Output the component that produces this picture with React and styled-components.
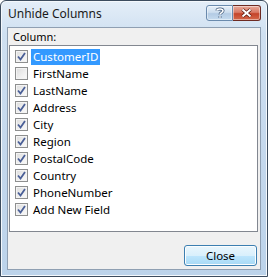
import React from 'react';
import styled, { createGlobalStyle } from 'styled-components';

const GlobalStyle = createGlobalStyle`
  html, body { margin: 0; padding: 0; background: #ffffff; }
  body { font-family: "Noto Sans", "DejaVu Sans", sans-serif; }
`;

const Window = styled.div`
  box-sizing: border-box;
  width: 268px;
  height: 277px;
  display: flex;
  flex-direction: column;
  border: 1px solid #3c4c5e;
  border-radius: 6px 6px 0 0;
  background: linear-gradient(180deg, #e4eef8 0%, #cfe0f1 12%, #c3d7ec 60%, #bcd3ea 100%);
  box-shadow: inset 0 0 0 1px #f4f8fc;
  overflow: hidden;
`;

const TitleBar = styled.div`
  height: 26px;
  display: flex;
  align-items: flex-start;
  justify-content: space-between;
  padding: 0 6px 0 7px;
`;

const Title = styled.div`
  font-size: 12px;
  color: #1a1a1a;
  margin-top: 4px;
`;

const Caption = styled.div`
  display: flex;
  margin-top: 4px;
`;

const CapButton = styled.div`
  box-sizing: border-box;
  width: ${(p) => (p.$close ? '28px' : '27px')};
  height: 16px;
  border: 1px solid ${(p) => (p.$close ? '#6d2a22' : '#6a8aad')};
  border-left-width: ${(p) => (p.$close ? '0' : '1px')};
  border-radius: ${(p) => (p.$close ? '0 3px 3px 0' : '3px 0 0 3px')};
  background: ${(p) =>
    p.$close
      ? 'linear-gradient(180deg, #e9a99a 0%, #d97a66 45%, #c4442a 55%, #d5684a 100%)'
      : 'linear-gradient(180deg, #e6eff8 0%, #cddeef 45%, #b3cbe4 55%, #c6dbef 100%)'};
  box-shadow: inset 0 0 0 1px rgba(255, 255, 255, 0.45);
  display: flex;
  align-items: center;
  justify-content: center;
`;

const Client = styled.div`
  flex: 1;
  margin: 0 6px 6px 6px;
  border: 1px solid #8f9fb2;
  background: #f0f0f0;
  display: flex;
  flex-direction: column;
  padding: 0 2px 0 1px;
`;

const Label = styled.div`
  font-size: 11px;
  color: #000;
  margin: 2px 0 0 4px;
  height: 13px;
  line-height: 13px;
`;

const List = styled.div`
  margin-top: 2px;
  height: 183px;
  border: 1px solid #828790;
  background: #fff;
  padding-top: 2px;
`;

const Row = styled.div`
  height: 17px;
  display: flex;
  align-items: center;
  padding-left: 5px;
`;

const Box = styled.span`
  box-sizing: border-box;
  width: 13px;
  height: 13px;
  border: 1px solid #8e8f8f;
  background: linear-gradient(135deg, #dcdcdc 0%, #f0f0f0 60%, #fafafa 100%);
  box-shadow: inset 0 0 0 1px #f4f4f4;
  display: flex;
  align-items: center;
  justify-content: center;
  margin-right: 3px;
`;

const Text = styled.span`
  font-size: 11.5px;
  padding: 1px 2px 2px;
  color: ${(p) => (p.$selected ? '#fff' : '#000')};
  background: ${(p) => (p.$selected ? '#3399ff' : 'transparent')};
  line-height: 13px;
`;

const Footer = styled.div`
  display: flex;
  justify-content: flex-end;
  margin-top: 13px;
  padding-right: 1px;
`;

const Button = styled.button`
  width: 73px;
  height: 21px;
  border: 1px solid #3c7fb1;
  border-radius: 3px;
  background: linear-gradient(180deg, #eaf6fd 0%, #d9f0fc 50%, #bee6fd 51%, #a7d9f5 100%);
  box-shadow: inset 0 0 0 1px #fbfdfe;
  font-family: "Noto Sans", "DejaVu Sans", sans-serif;
  font-size: 11.5px;
  color: #000;
  padding: 0;
`;

const Check = () => (
  <svg width="9" height="9" viewBox="0 0 9 9">
    <path d="M1 4.5 L3.5 7.5 L8 1" fill="none" stroke="#4a5f97" strokeWidth="1.8" />
  </svg>
);

const HelpGlyph = () => (
  <svg width="10" height="12" viewBox="0 0 10 12">
    <path
      d="M2 3.5 C2 1.5 8 1.2 8 3.8 C8 5.6 5 5.6 5 7.6 M5 9.2 V10.8"
      fill="none"
      stroke="#3f5878"
      strokeWidth="3"
    />
    <path
      d="M2 3.5 C2 1.5 8 1.2 8 3.8 C8 5.6 5 5.6 5 7.6 M5 9.2 V10.8"
      fill="none"
      stroke="#fff"
      strokeWidth="1.6"
    />
  </svg>
);

const CloseGlyph = () => (
  <svg width="13" height="10" viewBox="0 0 13 10">
    <path d="M2.5 1.5 L10.5 8.5 M10.5 1.5 L2.5 8.5" stroke="#5a1a10" strokeWidth="3.6" />
    <path d="M2.5 1.5 L10.5 8.5 M10.5 1.5 L2.5 8.5" stroke="#fff" strokeWidth="2" />
  </svg>
);

const fields = [
  { name: 'CustomerID', on: true, selected: true },
  { name: 'FirstName', on: false },
  { name: 'LastName', on: true },
  { name: 'Address', on: true },
  { name: 'City', on: true },
  { name: 'Region', on: true },
  { name: 'PostalCode', on: true },
  { name: 'Country', on: true },
  { name: 'PhoneNumber', on: true },
  { name: 'Add New Field', on: true },
];

export default function App() {
  return (
    <>
      <GlobalStyle />
      <Window>
        <TitleBar>
          <Title>Unhide Columns</Title>
          <Caption>
            <CapButton>
              <HelpGlyph />
            </CapButton>
            <CapButton $close>
              <CloseGlyph />
            </CapButton>
          </Caption>
        </TitleBar>
        <Client>
          <Label>Column:</Label>
          <List>
            {fields.map((f) => (
              <Row key={f.name}>
                <Box>{f.on && <Check />}</Box>
                <Text $selected={f.selected}>{f.name}</Text>
              </Row>
            ))}
          </List>
          <Footer>
            <Button>Close</Button>
          </Footer>
        </Client>
      </Window>
    </>
  );
}
